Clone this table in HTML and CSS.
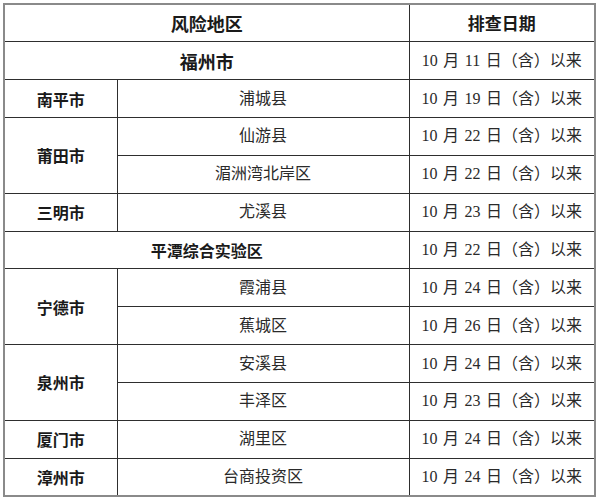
FILE: index.html
```html
<!DOCTYPE html>
<html lang="zh-CN">
<head>
<meta charset="utf-8">
<link rel="stylesheet" href="styles.css">
</head>
<body>
<table class="risk">
  <colgroup>
    <col class="c-city">
    <col class="c-area">
    <col class="c-date">
  </colgroup>
  <tr class="head">
    <th colspan="2" class="big">风险地区</th>
    <th>排查日期</th>
  </tr>
  <tr>
    <td colspan="2" class="big b">福州市</td>
    <td class="d">10 月 11 日（含）以来</td>
  </tr>
  <tr>
    <td class="b">南平市</td>
    <td>浦城县</td>
    <td class="d">10 月 19 日（含）以来</td>
  </tr>
  <tr>
    <td rowspan="2" class="b">莆田市</td>
    <td>仙游县</td>
    <td class="d">10 月 22 日（含）以来</td>
  </tr>
  <tr>
    <td>湄洲湾北岸区</td>
    <td class="d">10 月 22 日（含）以来</td>
  </tr>
  <tr>
    <td class="b">三明市</td>
    <td>尤溪县</td>
    <td class="d">10 月 23 日（含）以来</td>
  </tr>
  <tr>
    <td colspan="2" class="b">平潭综合实验区</td>
    <td class="d">10 月 22 日（含）以来</td>
  </tr>
  <tr>
    <td rowspan="2" class="b">宁德市</td>
    <td>霞浦县</td>
    <td class="d">10 月 24 日（含）以来</td>
  </tr>
  <tr>
    <td>蕉城区</td>
    <td class="d">10 月 26 日（含）以来</td>
  </tr>
  <tr>
    <td rowspan="2" class="b">泉州市</td>
    <td>安溪县</td>
    <td class="d">10 月 24 日（含）以来</td>
  </tr>
  <tr>
    <td>丰泽区</td>
    <td class="d">10 月 23 日（含）以来</td>
  </tr>
  <tr>
    <td class="b">厦门市</td>
    <td>湖里区</td>
    <td class="d">10 月 24 日（含）以来</td>
  </tr>
  <tr>
    <td class="b">漳州市</td>
    <td>台商投资区</td>
    <td class="d">10 月 24 日（含）以来</td>
  </tr>
</table>
</body>
</html>
```

FILE: styles.css
```css
html, body {
  margin: 0;
  padding: 0;
  background: #ffffff;
}
body {
  padding: 3px 0 0 3px;
}
.risk {
  border-collapse: collapse;
  table-layout: fixed;
  width: 593px;
  border: 2px solid #8a8a8a;
  font-family: "Liberation Serif", "Noto Sans CJK SC", serif;
  font-size: 16px;
  color: #2a2a2a;
}
.c-city { width: 113px; }
.c-area { width: 292px; }
.c-date { width: 186px; }
.risk tr {
  height: 37.85px;
}
.risk th,
.risk td {
  border: 1px solid #2e2e2e;
  padding: 0;
  text-align: center;
  vertical-align: middle;
  line-height: 20px;
  font-weight: 400;
}
.risk .d {
  word-spacing: 1.5px;
}
.risk th,
.risk .b {
  font-weight: 700;
  font-family: "Noto Sans CJK SC", sans-serif;
  color: #1a1a1a;
}
.risk .big {
  font-size: 18px;
}
.risk th {
  font-size: 17px;
}
.risk th.big {
  font-size: 18px;
}
```
